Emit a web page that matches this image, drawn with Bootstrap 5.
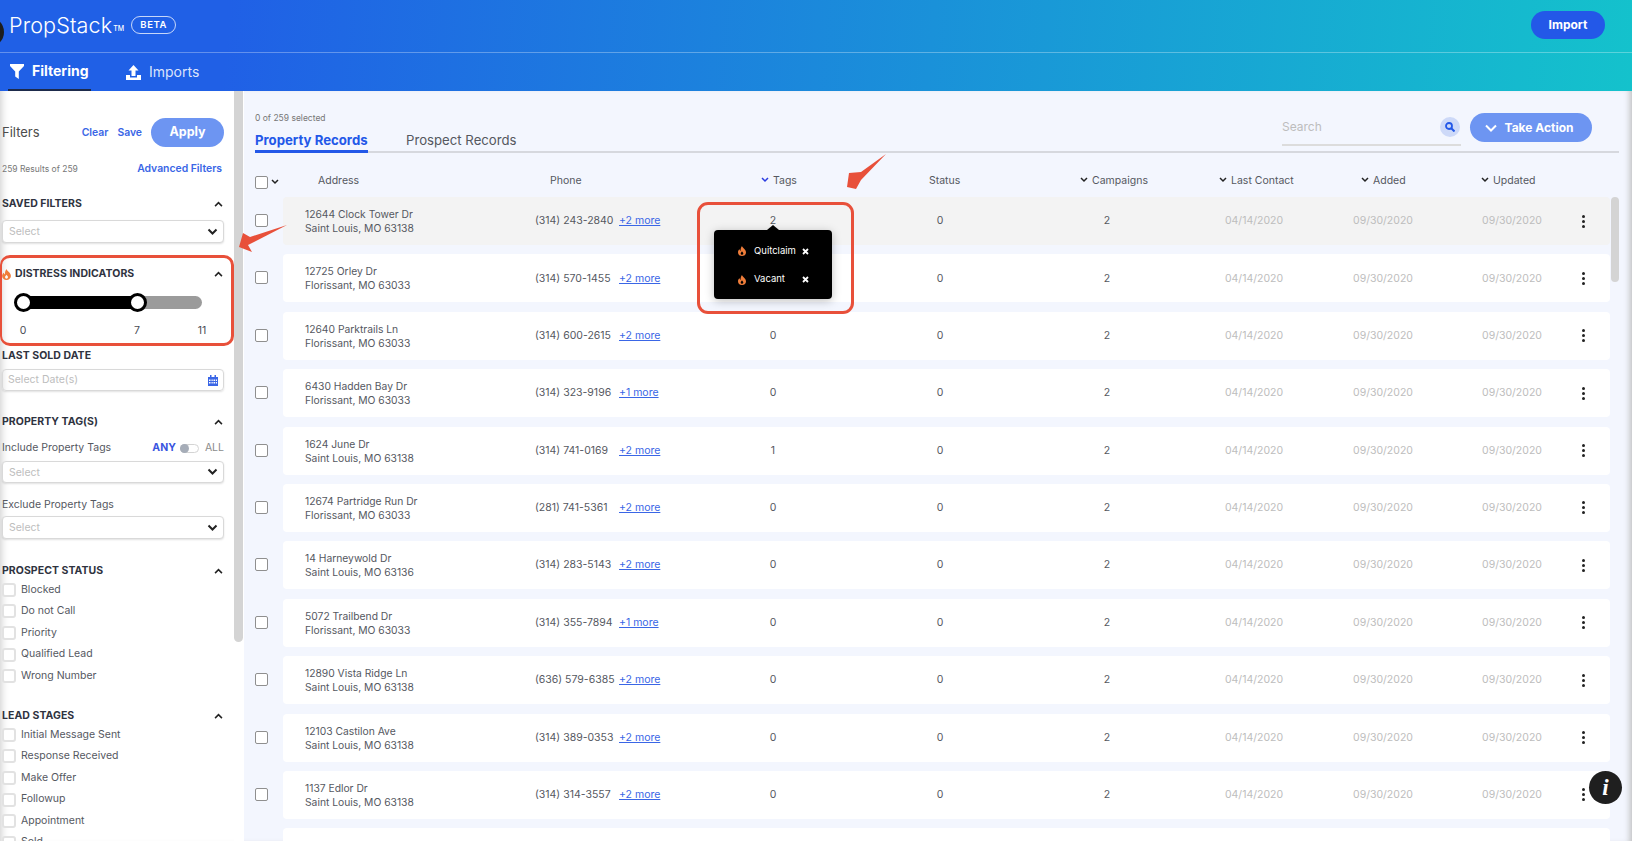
<!doctype html>
<html lang="en">
<head>
<meta charset="utf-8">
<title>PropStack</title>
<link rel="stylesheet" href="https://cdn.jsdelivr.net/npm/bootstrap@5.3.0/dist/css/bootstrap.min.css">
<style>
html,body{height:841px;overflow:hidden}
body{font-family:Inter,"Liberation Sans",sans-serif;font-size:11px;color:#4a4d55;background:#f3f6fe;position:relative}
.ps-head{height:91px;background:linear-gradient(95deg,#2060e6 14%,#14c2cc 100%);color:#fff;position:relative}
.ps-top{height:53px;border-bottom:1px solid rgba(255,255,255,.3);padding:0 27px 2px 9px}
.ps-dot{position:absolute;left:-26px;top:17px;width:30px;height:30px;border-radius:50%;background:#1d1d1d}
.ps-logo{font-size:21.6px;font-weight:300;letter-spacing:.1px;line-height:48px}
.ps-tm{font-size:7px;font-weight:500;margin-left:1px;margin-top:8px}
.ps-beta{font-size:9.5px;font-weight:600;letter-spacing:.6px;border:1px solid rgba(255,255,255,.75);border-radius:9px;height:18px;width:45px;margin-left:7px;line-height:16px;text-align:center}
.ps-imp{background:#2358e8;color:#fff;border:0;border-radius:15px;font-size:12px;font-weight:700;width:74px;height:28px;padding:0}
.ps-tabs{height:38px;padding-left:8px}
.ps-tab{font-size:14px;height:38px;line-height:36px;color:rgba(255,255,255,.85);display:flex;align-items:center;gap:8px}
.ps-tab.on{width:83px;padding-left:2px;font-weight:700;color:#fff;border-bottom:2px solid #1c2a4a}
.ps-tab.off{margin-left:35px}
.ps-body{height:750px}
.ps-side{width:234px;height:750px;background:#fff;overflow:hidden;flex:none;padding:0 10px 0 2px;box-shadow:inset 8px 0 8px -7px #c8c8c8}
.ps-bar{width:10px;flex:none;height:750px;background:#fff;position:relative}
.ps-bar i{position:absolute;left:0;top:0;width:9px;height:551px;background:#d4d4d4;border-radius:0 0 5px 5px}
.ps-main{flex:1;position:relative;height:750px;padding-left:11px;box-shadow:inset -6px 0 6px -4px #bdbdbd;overflow:hidden}
.f-r1{height:29px;margin-top:27px}
.f-title{font-size:13px;color:#4c4c4c}
.f-link{color:#3a66e6;font-weight:600;font-size:10.4px}
.f-clear{margin-right:1px}
.f-apply{background:#6d95f2;color:#fff;border:0;border-radius:15px;width:73px;height:29px;padding:0;font-weight:700;font-size:12.5px;margin-left:9px}
.f-r2{height:18px;margin-top:13px;padding-right:2px}
.f-res{font-size:8.5px;color:#777}
.f-h{height:16px;padding-top:2px;font-size:10.5px;font-weight:700;color:#2f3340;letter-spacing:.05px;line-height:14px}
.f-h svg.up{width:9px;height:6px;margin-right:1px}
.m22{margin-top:22px}.m23{margin-top:23px}.m16{margin-top:17px}.m10{margin-top:9px}.m20{margin-top:20px}
.f-sel{height:23px;min-height:0;font-size:10.5px;color:#bdbdbd;padding:0 24px 0 6px;line-height:21px;border-radius:4px;border:1px solid #d9d9d9;box-shadow:0 1px 2px rgba(0,0,0,.12);background-size:11px 8px;background-position:right 5px center;background-image:url("data:image/svg+xml,%3csvg xmlns='http://www.w3.org/2000/svg' viewBox='0 0 11 8'%3e%3cpath fill='none' stroke='%23222' stroke-width='2' d='M1.5 1.5l4 4 4-4'/%3e%3c/svg%3e")}
.h22{height:22px}
.f-track{height:19px;margin:12px 22px 0 11px;position:relative}
.f-rail{position:absolute;left:10px;right:0;top:3px;height:13px;background:#9b9b9b;border-radius:0 7px 7px 0}
.f-fill{position:absolute;left:8px;top:3px;height:13px;width:116px;background:#000}
.f-thumb{position:absolute;top:0;width:19px;height:19px;border-radius:50%;background:#fff;border:3px solid #000}
.f-nums{height:14px;margin:12px 0 0;position:relative;font-size:10.5px;line-height:14px}
.f-nums span{position:absolute;transform:translateX(-50%)}
.n0{left:21px}.n7{left:135px}.n11{left:200px}
.f-date{height:22px;margin-top:6px;border:1px solid #d9d9d9;border-radius:4px;box-shadow:0 1px 2px rgba(0,0,0,.12);padding:0 5px;color:#bdbdbd;font-size:10.5px}
.f-lab{height:16px;padding-top:2px;line-height:14px;font-size:10.5px;color:#55585f}
.m9{margin-top:10px}.m13{margin-top:13px}.m7{margin-top:6px}.m4{margin-top:4px}
.f-any{font-weight:700;color:#3a55e0;font-size:10.5px}
.f-all{color:#8b8b8b;font-size:10.5px}
.f-sw{width:19px;height:9px;border:1px solid #d4d4d4;border-radius:5px;margin:0 6px 0 4px;position:relative;background:#fff}
.f-sw i{position:absolute;left:-1px;top:-1px;width:9px;height:9px;border-radius:50%;background:#a6adb8}
.f-chk{height:21.6px;font-size:10.5px;color:#55585f;gap:5px;line-height:1}
.f-chk .form-check-input{width:14px;height:14px;margin:0;border:2px solid #e2e2e2;border-radius:3px;flex:none}
.m1{margin-top:1px}
.t-sel{font-size:8.5px;color:#777;height:36px;line-height:10px;padding-top:22px}
.t-tabs{height:26px;border-bottom:2px solid #d6d8de;margin-right:13px;position:relative}
.t-pr{font-size:13.2px;font-weight:700;color:#2358e8;height:26px;padding-top:2px;width:113px;border-bottom:3px solid #2358e8;white-space:nowrap;line-height:22px}
.t-pp{font-size:13.2px;color:#55585f;margin-left:38px;padding-top:2px;line-height:22px}
.t-tool{position:absolute;right:40px;top:22px;gap:9px}
.t-search{width:179px;height:33px;padding-bottom:4px;border-bottom:2px solid #dcdcdc;font-size:12px;color:#bdbdbd}
.t-ico{width:20px;height:20px;border-radius:50%;background:#cdd9f8;margin-right:1px}
.t-act{background:#6d95f2;color:#fff;border:0;border-radius:15px;width:122px;height:29px;padding:0 4px 0 0;font-weight:700;font-size:12px;gap:8px}
.grid-l{display:grid;grid-template-columns:252px 165px 146px 188px 146px 148px 110px 140px 1fr}
.hdr{height:44px;padding-top:12px;font-size:10.5px;color:#55585f;align-items:center;position:relative;margin:0 22px 0 28px}
.hdr svg{width:8px;height:6px;margin-right:4px;vertical-align:1px}
.p35{padding-left:35px}.p15{padding-left:15px}.p61{padding-left:61px}.p83{padding-left:83px}.p46{padding-left:46px}.p39{padding-left:39px}.p33{padding-left:33px}.p43{padding-left:43px}
.rw{position:relative;margin:0 22px 9.4px 28px}
.rw>.form-check-input{position:absolute;left:-28px;top:17px;margin:0}
.form-check-input.hck{position:absolute;left:-28px;top:23px;margin:0}
.form-check-input.ck{width:13px;height:13px;border:1.5px solid #8f8f8f;border-radius:2px}
.hdr svg.hck2{position:absolute;left:-12px;top:26px;margin:0}
.cel{height:48px;background:#fff;align-items:center;font-size:10.5px;color:#55585f;border-radius:4px}
.rw.hl .cel{background:#f3f3f3}
.cel>div{text-align:center}
.cel>.addr{text-align:left;padding-left:22px;line-height:14px;font-size:10.3px}
.cel>.ph{display:grid;grid-template-columns:84px auto;justify-content:start;text-align:left;white-space:nowrap}
.cel>.ph a{color:#3a66e6}
.cel>.dt{color:#bdbdbd}
.cel>.upd{padding-left:8px}
.dots{display:flex;flex-direction:column;gap:2px;align-items:center;width:10px}
.dots i{width:3px;height:3px;border-radius:50%;background:#222;display:block}
.m-thumb{position:absolute;left:1367px;top:106px;width:8px;height:85px;background:#d4d4d4;border-radius:4px}
.ttip{position:absolute;left:714px;top:230px;width:118px;height:69px;background:#000;border-radius:4px;color:#fff;font-size:9.5px;box-shadow:0 2px 10px rgba(0,0,0,.25);padding:7px 0 0 24px;z-index:3}
.ttip:before{content:"";position:absolute;left:53px;top:-5px;border:6px solid transparent;border-top:0;border-bottom:5px solid #000}
.tt-r{height:28.4px;display:flex;align-items:center}
.tt-n{width:48px;margin-left:8px}
.red{position:absolute;border:3px solid #e8503a;z-index:4;pointer-events:none}
.red.a{left:0;top:255px;width:234px;height:91px;border-left-width:2px;border-radius:10px}
.red.b{left:697px;top:202px;width:157px;height:112px;border-radius:11px}
.arw{position:absolute;left:0;top:0;width:1632px;height:841px;z-index:5;pointer-events:none}
.info{position:absolute;left:1589px;top:771px;width:33px;height:33px;border-radius:50%;background:#1f1f1f;color:#fff;font:italic 700 23px/33px "Liberation Serif",serif;text-align:center;z-index:6}
#th0{left:1px}#th7{left:115px}
</style>
</head>
<body>
<header class="ps-head">
  <div class="ps-dot"></div>
  <div class="ps-top d-flex align-items-center">
    <div class="ps-logo">PropStack</div><div class="ps-tm">TM</div><div class="ps-beta">BETA</div>
    <button class="btn ps-imp ms-auto">Import</button>
  </div>
  <nav class="ps-tabs d-flex">
    <div class="ps-tab on"><svg width="14" height="15" viewBox="0 0 14 15"><path fill="#fff" d="M0 0h14v2L8.8 7.5V15L5.2 12.5V7.5L0 2z"/></svg>Filtering</div>
    <div class="ps-tab off"><svg width="15" height="15" viewBox="0 0 15 15"><path fill="#fff" d="M7.5 0l5 5.5H9.5V11h-4V5.500H2.500zM0 10h4v2.500h7V10h4v5H0z"/></svg>Imports</div>
  </nav>
</header>
<div class="ps-body d-flex">
  <aside class="ps-side">
    <div class="f-r1 d-flex align-items-center">
      <span class="f-title me-auto">Filters</span><span class="f-link f-clear">Clear</span><span class="f-link ms-2">Save</span><button class="btn f-apply">Apply</button>
    </div>
    <div class="f-r2 d-flex align-items-center justify-content-between"><span class="f-res">259 Results of 259</span><span class="f-link">Advanced Filters</span></div>
    <div class="f-h m16 d-flex justify-content-between align-items-center"><span>SAVED FILTERS</span><svg class="up" viewBox="0 0 10 7"><path fill="none" stroke="#222" stroke-width="1.800" d="M1 6l4-4 4 4"/></svg></div>
    <select class="form-select f-sel m10"><option>Select</option></select>
    <div class="f-h m22 d-flex justify-content-between align-items-center"><span class="d-flex align-items-center"><svg width="9" height="11" viewBox="0 0 12 15" class="me-1"><path fill="#ef7d3a" fill-rule="evenodd" d="M6 0c.5 2.500 6 5 6 9.500a6 5.500 0 0 1-12 0C0 7.500 1 6 2.300 5c.2 1.200.8 2 1.700 2.400C3.600 4.800 4.500 2 6 0zM6 8C5 9.500 4 10 4 11.300a2 2 0 0 0 4 0C8 10 7 9.500 6 8z"/></svg>DISTRESS INDICATORS</span><svg class="up" viewBox="0 0 10 7"><path fill="none" stroke="#222" stroke-width="1.800" d="M1 6l4-4 4 4"/></svg></div>
    <div class="f-track"><div class="f-rail"></div><div class="f-fill"></div><div class="f-thumb" id="th0"></div><div class="f-thumb" id="th7"></div></div>
    <div class="f-nums"><span class="n0">0</span><span class="n7">7</span><span class="n11">11</span></div>
    <div class="f-h m10">LAST SOLD DATE</div>
    <div class="f-date d-flex align-items-center justify-content-between"><span>Select Date(s)</span><svg width="10" height="11" viewBox="0 0 10 11"><path fill="#3a66e6" d="M0 2h2V0h1.500v2h3V0H8v2h2v9H0zM1 4.500v1.500h1.500V4.500zm2.500 0v1.500h1.200V4.500zm2 0v1.500H7V4.500zm2.300 0v1.500H9V4.500zM1 7v1.500h1.500V7zm2.500 0v1.500h1.200V7zm2 0v1.500H7V7zm2.300 0v1.500H9V7z"/></svg></div>
    <div class="f-h m22 d-flex justify-content-between align-items-center"><span>PROPERTY TAG(S)</span><svg class="up" viewBox="0 0 10 7"><path fill="none" stroke="#222" stroke-width="1.800" d="M1 6l4-4 4 4"/></svg></div>
    <div class="f-lab m9 d-flex align-items-center"><span class="me-auto">Include Property Tags</span><span class="f-any">ANY</span><span class="f-sw"><i></i></span><span class="f-all">ALL</span></div>
    <select class="form-select f-sel h22 m7"><option>Select</option></select>
    <div class="f-lab m13">Exclude Property Tags</div>
    <select class="form-select f-sel m4"><option>Select</option></select>
    <div class="f-h m23 d-flex justify-content-between align-items-center"><span>PROSPECT STATUS</span><svg class="up" viewBox="0 0 10 7"><path fill="none" stroke="#222" stroke-width="1.800" d="M1 6l4-4 4 4"/></svg></div>
    <div class="m1">
      <div class="f-chk d-flex align-items-center"><input class="form-check-input" type="checkbox"><span>Blocked</span></div>
      <div class="f-chk d-flex align-items-center"><input class="form-check-input" type="checkbox"><span>Do not Call</span></div>
      <div class="f-chk d-flex align-items-center"><input class="form-check-input" type="checkbox"><span>Priority</span></div>
      <div class="f-chk d-flex align-items-center"><input class="form-check-input" type="checkbox"><span>Qualified Lead</span></div>
      <div class="f-chk d-flex align-items-center"><input class="form-check-input" type="checkbox"><span>Wrong Number</span></div>
    </div>
    <div class="f-h m20 d-flex justify-content-between align-items-center"><span>LEAD STAGES</span><svg class="up" viewBox="0 0 10 7"><path fill="none" stroke="#222" stroke-width="1.800" d="M1 6l4-4 4 4"/></svg></div>
    <div class="m1">
      <div class="f-chk d-flex align-items-center"><input class="form-check-input" type="checkbox"><span>Initial Message Sent</span></div>
      <div class="f-chk d-flex align-items-center"><input class="form-check-input" type="checkbox"><span>Response Received</span></div>
      <div class="f-chk d-flex align-items-center"><input class="form-check-input" type="checkbox"><span>Make Offer</span></div>
      <div class="f-chk d-flex align-items-center"><input class="form-check-input" type="checkbox"><span>Followup</span></div>
      <div class="f-chk d-flex align-items-center"><input class="form-check-input" type="checkbox"><span>Appointment</span></div>
      <div class="f-chk d-flex align-items-center"><input class="form-check-input" type="checkbox"><span>Sold</span></div>
    </div>
  </aside>
  <div class="ps-bar"><i></i></div>
  <main class="ps-main">
    <div class="t-sel">0 of 259 selected</div>
    <div class="t-tabs d-flex"><div class="t-pr">Property Records</div><div class="t-pp">Prospect Records</div></div>
    <div class="t-tool d-flex align-items-start">
      <div class="t-search d-flex align-items-center justify-content-between"><span>Search</span><span class="t-ico d-flex align-items-center justify-content-center"><svg width="10" height="10" viewBox="0 0 10 10"><circle cx="4" cy="4" r="3" fill="none" stroke="#2358e8" stroke-width="1.800"/><path stroke="#2358e8" stroke-width="2" d="M6.300 6.300L9.500 9.500"/></svg></span></div>
      <button class="btn t-act d-flex align-items-center justify-content-center"><svg width="12" height="8" viewBox="0 0 12 8"><path fill="none" stroke="#fff" stroke-width="2" d="M1 1.500l5 5 5-5"/></svg>Take Action</button>
    </div>
    <div class="grid-l hdr">
      <input class="form-check-input ck hck" type="checkbox"><svg class="hck2" viewBox="0 0 8 6"><path fill="none" stroke="#222" stroke-width="1.500" d="M1 1l3 3 3-3"/></svg>
      <div class="p35">Address</div><div class="p15">Phone</div>
      <div class="p61"><svg viewBox="0 0 8 6"><path fill="none" stroke="#2a3be0" stroke-width="1.500" d="M1 1l3 3 3-3"/></svg>Tags</div>
      <div class="p83">Status</div>
      <div class="p46"><svg viewBox="0 0 8 6"><path fill="none" stroke="#222" stroke-width="1.500" d="M1 1l3 3 3-3"/></svg>Campaigns</div>
      <div class="p39"><svg viewBox="0 0 8 6"><path fill="none" stroke="#222" stroke-width="1.500" d="M1 1l3 3 3-3"/></svg>Last Contact</div>
      <div class="p33"><svg viewBox="0 0 8 6"><path fill="none" stroke="#222" stroke-width="1.500" d="M1 1l3 3 3-3"/></svg>Added</div>
      <div class="p43"><svg viewBox="0 0 8 6"><path fill="none" stroke="#222" stroke-width="1.500" d="M1 1l3 3 3-3"/></svg>Updated</div>
    </div>
    <div id="rows">
      <div class="rw hl"><input class="form-check-input ck" type="checkbox"><div class="grid-l cel"><div class="addr">12644 Clock Tower Dr<br>Saint Louis, MO 63138</div><div class="ph">(314) 243-2840 <a href="#">+2 more</a></div><div>2</div><div>0</div><div>2</div><div class="dt">04/14/2020</div><div class="dt">09/30/2020</div><div class="dt upd">09/30/2020</div><div class="dots"><i></i><i></i><i></i></div></div></div>
      <div class="rw"><input class="form-check-input ck" type="checkbox"><div class="grid-l cel"><div class="addr">12725 Orley Dr<br>Florissant, MO 63033</div><div class="ph">(314) 570-1455 <a href="#">+2 more</a></div><div></div><div>0</div><div>2</div><div class="dt">04/14/2020</div><div class="dt">09/30/2020</div><div class="dt upd">09/30/2020</div><div class="dots"><i></i><i></i><i></i></div></div></div>
      <div class="rw"><input class="form-check-input ck" type="checkbox"><div class="grid-l cel"><div class="addr">12640 Parktrails Ln<br>Florissant, MO 63033</div><div class="ph">(314) 600-2615 <a href="#">+2 more</a></div><div>0</div><div>0</div><div>2</div><div class="dt">04/14/2020</div><div class="dt">09/30/2020</div><div class="dt upd">09/30/2020</div><div class="dots"><i></i><i></i><i></i></div></div></div>
      <div class="rw"><input class="form-check-input ck" type="checkbox"><div class="grid-l cel"><div class="addr">6430 Hadden Bay Dr<br>Florissant, MO 63033</div><div class="ph">(314) 323-9196 <a href="#">+1 more</a></div><div>0</div><div>0</div><div>2</div><div class="dt">04/14/2020</div><div class="dt">09/30/2020</div><div class="dt upd">09/30/2020</div><div class="dots"><i></i><i></i><i></i></div></div></div>
      <div class="rw"><input class="form-check-input ck" type="checkbox"><div class="grid-l cel"><div class="addr">1624 June Dr<br>Saint Louis, MO 63138</div><div class="ph">(314) 741-0169 <a href="#">+2 more</a></div><div>1</div><div>0</div><div>2</div><div class="dt">04/14/2020</div><div class="dt">09/30/2020</div><div class="dt upd">09/30/2020</div><div class="dots"><i></i><i></i><i></i></div></div></div>
      <div class="rw"><input class="form-check-input ck" type="checkbox"><div class="grid-l cel"><div class="addr">12674 Partridge Run Dr<br>Florissant, MO 63033</div><div class="ph">(281) 741-5361 <a href="#">+2 more</a></div><div>0</div><div>0</div><div>2</div><div class="dt">04/14/2020</div><div class="dt">09/30/2020</div><div class="dt upd">09/30/2020</div><div class="dots"><i></i><i></i><i></i></div></div></div>
      <div class="rw"><input class="form-check-input ck" type="checkbox"><div class="grid-l cel"><div class="addr">14 Harneywold Dr<br>Saint Louis, MO 63136</div><div class="ph">(314) 283-5143 <a href="#">+2 more</a></div><div>0</div><div>0</div><div>2</div><div class="dt">04/14/2020</div><div class="dt">09/30/2020</div><div class="dt upd">09/30/2020</div><div class="dots"><i></i><i></i><i></i></div></div></div>
      <div class="rw"><input class="form-check-input ck" type="checkbox"><div class="grid-l cel"><div class="addr">5072 Trailbend Dr<br>Florissant, MO 63033</div><div class="ph">(314) 355-7894 <a href="#">+1 more</a></div><div>0</div><div>0</div><div>2</div><div class="dt">04/14/2020</div><div class="dt">09/30/2020</div><div class="dt upd">09/30/2020</div><div class="dots"><i></i><i></i><i></i></div></div></div>
      <div class="rw"><input class="form-check-input ck" type="checkbox"><div class="grid-l cel"><div class="addr">12890 Vista Ridge Ln<br>Saint Louis, MO 63138</div><div class="ph">(636) 579-6385 <a href="#">+2 more</a></div><div>0</div><div>0</div><div>2</div><div class="dt">04/14/2020</div><div class="dt">09/30/2020</div><div class="dt upd">09/30/2020</div><div class="dots"><i></i><i></i><i></i></div></div></div>
      <div class="rw"><input class="form-check-input ck" type="checkbox"><div class="grid-l cel"><div class="addr">12103 Castilon Ave<br>Saint Louis, MO 63138</div><div class="ph">(314) 389-0353 <a href="#">+2 more</a></div><div>0</div><div>0</div><div>2</div><div class="dt">04/14/2020</div><div class="dt">09/30/2020</div><div class="dt upd">09/30/2020</div><div class="dots"><i></i><i></i><i></i></div></div></div>
      <div class="rw"><input class="form-check-input ck" type="checkbox"><div class="grid-l cel"><div class="addr">1137 Edlor Dr<br>Saint Louis, MO 63138</div><div class="ph">(314) 314-3557 <a href="#">+2 more</a></div><div>0</div><div>0</div><div>2</div><div class="dt">04/14/2020</div><div class="dt">09/30/2020</div><div class="dt upd">09/30/2020</div><div class="dots"><i></i><i></i><i></i></div></div></div>
      <div class="rw"><div class="grid-l cel"></div></div>
    </div>
    <div class="m-thumb"></div>
  </main>
</div>
<div class="ttip">
  <div class="tt-r"><svg width="8" height="10" viewBox="0 0 12 15"><path fill="#ef7d3a" fill-rule="evenodd" d="M6 0c.5 2.500 6 5 6 9.500a6 5.500 0 0 1-12 0C0 7.500 1 6 2.300 5c.2 1.200.8 2 1.700 2.400C3.600 4.800 4.500 2 6 0zM6 8C5 9.500 4 10 4 11.300a2 2 0 0 0 4 0C8 10 7 9.500 6 8z"/></svg><span class="tt-n">Quitclaim</span><svg width="7" height="7" viewBox="0 0 7 7"><path stroke="#fff" stroke-width="1.800" d="M1 1l5 5M6 1L1 6"/></svg></div>
  <div class="tt-r"><svg width="8" height="10" viewBox="0 0 12 15"><path fill="#ef7d3a" fill-rule="evenodd" d="M6 0c.5 2.500 6 5 6 9.500a6 5.500 0 0 1-12 0C0 7.500 1 6 2.300 5c.2 1.200.8 2 1.700 2.400C3.600 4.800 4.500 2 6 0zM6 8C5 9.500 4 10 4 11.300a2 2 0 0 0 4 0C8 10 7 9.500 6 8z"/></svg><span class="tt-n">Vacant</span><svg width="7" height="7" viewBox="0 0 7 7"><path stroke="#fff" stroke-width="1.800" d="M1 1l5 5M6 1L1 6"/></svg></div>
</div>
<div class="red a"></div>
<div class="red b"></div>
<svg class="arw" viewBox="0 0 1632 841"><path fill="#e8503a" d="M287 225L250 237 243 233 239 247 252 252 248 245zM886 154L861 172 849 173 847 187 856 189 861 180z"/></svg>
<div class="info">i</div>
<script src="https://cdn.jsdelivr.net/npm/bootstrap@5.3.0/dist/js/bootstrap.bundle.min.js"></script>
</body>
</html>
